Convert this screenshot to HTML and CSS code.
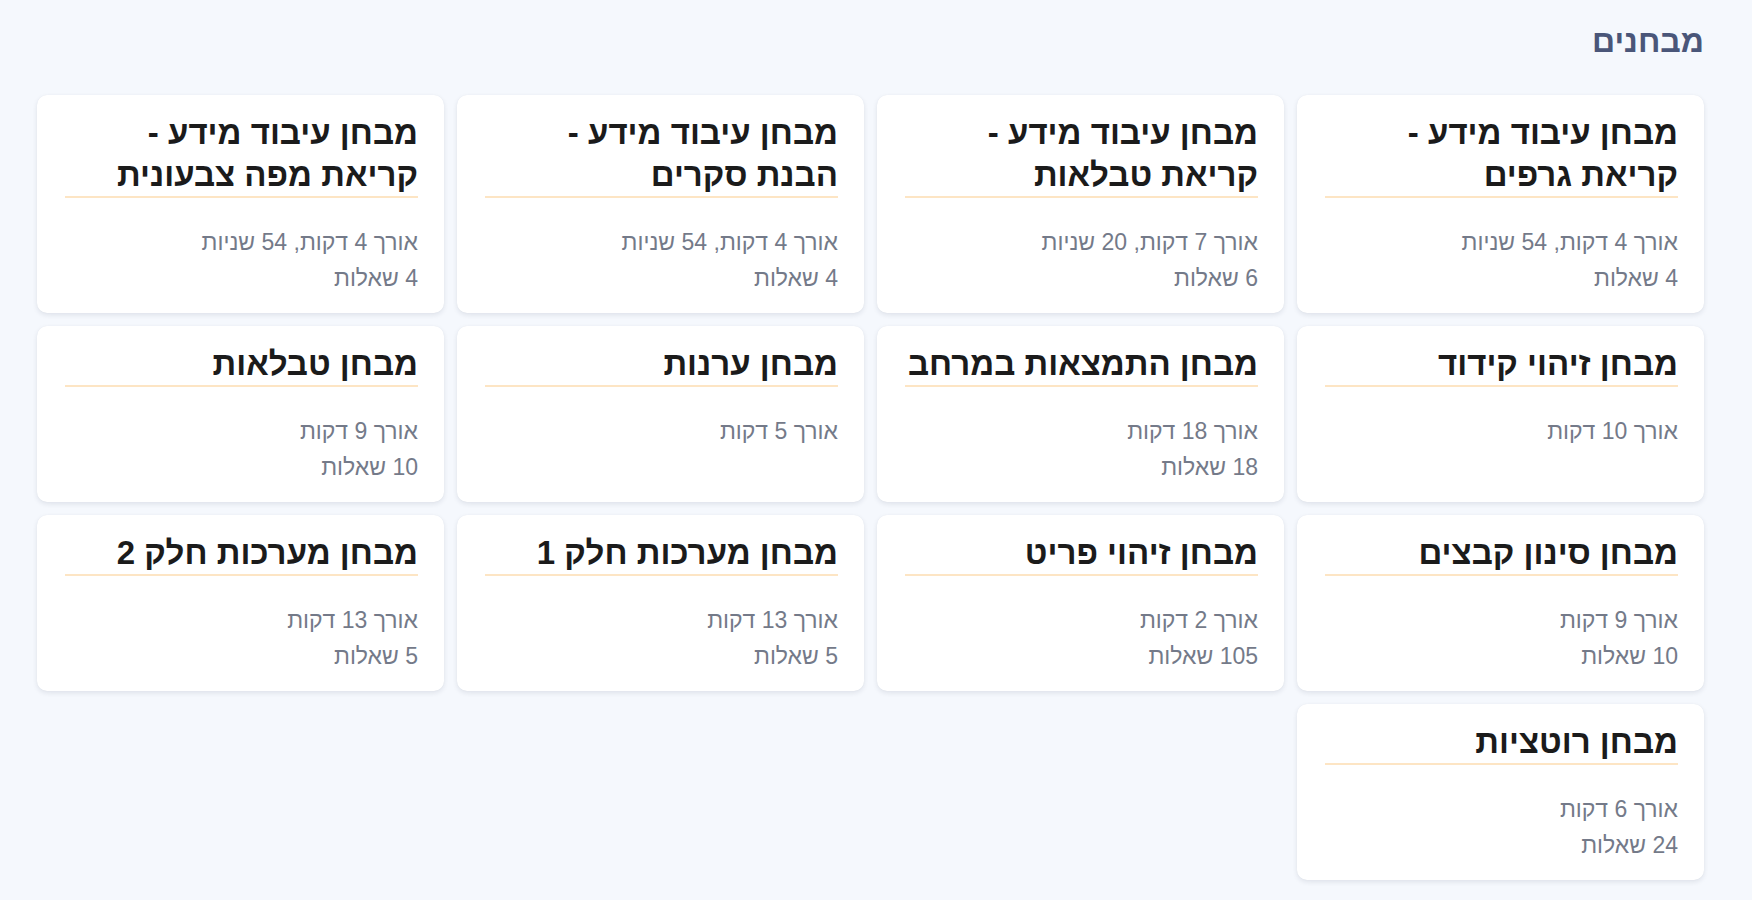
FILE: index.html
```html
<!DOCTYPE html>
<html lang="he" dir="rtl">
<head>
<meta charset="utf-8">
<title>מבחנים</title>
<link rel="stylesheet" href="styles.css">
</head>
<body>
<main class="page">
  <h1 class="page-title">מבחנים</h1>
  <section class="grid">
    <article class="card">
      <h2 class="card-title">מבחן עיבוד מידע -<br>קריאת גרפים</h2>
      <p class="meta">אורך 4 דקות, 54 שניות</p>
      <p class="meta">4 שאלות</p>
    </article>
    <article class="card">
      <h2 class="card-title">מבחן עיבוד מידע -<br>קריאת טבלאות</h2>
      <p class="meta">אורך 7 דקות, 20 שניות</p>
      <p class="meta">6 שאלות</p>
    </article>
    <article class="card">
      <h2 class="card-title">מבחן עיבוד מידע -<br>הבנת סקרים</h2>
      <p class="meta">אורך 4 דקות, 54 שניות</p>
      <p class="meta">4 שאלות</p>
    </article>
    <article class="card">
      <h2 class="card-title">מבחן עיבוד מידע -<br>קריאת מפה צבעונית</h2>
      <p class="meta">אורך 4 דקות, 54 שניות</p>
      <p class="meta">4 שאלות</p>
    </article>

    <article class="card">
      <h2 class="card-title">מבחן זיהוי קידוד</h2>
      <p class="meta">אורך 10 דקות</p>
    </article>
    <article class="card">
      <h2 class="card-title">מבחן התמצאות במרחב</h2>
      <p class="meta">אורך 18 דקות</p>
      <p class="meta">18 שאלות</p>
    </article>
    <article class="card">
      <h2 class="card-title">מבחן ערנות</h2>
      <p class="meta">אורך 5 דקות</p>
    </article>
    <article class="card">
      <h2 class="card-title">מבחן טבלאות</h2>
      <p class="meta">אורך 9 דקות</p>
      <p class="meta">10 שאלות</p>
    </article>

    <article class="card">
      <h2 class="card-title">מבחן סינון קבצים</h2>
      <p class="meta">אורך 9 דקות</p>
      <p class="meta">10 שאלות</p>
    </article>
    <article class="card">
      <h2 class="card-title">מבחן זיהוי פריט</h2>
      <p class="meta">אורך 2 דקות</p>
      <p class="meta">105 שאלות</p>
    </article>
    <article class="card">
      <h2 class="card-title">מבחן מערכות חלק 1</h2>
      <p class="meta">אורך 13 דקות</p>
      <p class="meta">5 שאלות</p>
    </article>
    <article class="card">
      <h2 class="card-title">מבחן מערכות חלק 2</h2>
      <p class="meta">אורך 13 דקות</p>
      <p class="meta">5 שאלות</p>
    </article>

    <article class="card">
      <h2 class="card-title">מבחן רוטציות</h2>
      <p class="meta">אורך 6 דקות</p>
      <p class="meta">24 שאלות</p>
    </article>
  </section>
</main>
</body>
</html>
```
FILE: styles.css
```css
html, body {
  margin: 0;
  padding: 0;
}

body {
  background: #f5f8fd;
  font-family: "Liberation Sans", Arial, sans-serif;
  color: #1b1b1b;
}

.page {
  padding: 19px 48px 20px 37px;
}

.page-title {
  margin: 0 0 32px 0;
  font-size: 32px;
  line-height: 44px;
  font-weight: 700;
  color: #4a5679;
}

.grid {
  display: grid;
  grid-template-columns: repeat(4, 1fr);
  gap: 13px;
}

.card {
  background: #ffffff;
  border-radius: 10px;
  box-shadow: 0 2px 5px rgba(30, 40, 70, 0.1), 0 0 1px rgba(30, 40, 70, 0.07);
  padding: 17px 26px 17px 28px;
}

.card-title {
  margin: 0 0 26px 0;
  font-size: 33px;
  line-height: 42px;
  font-weight: 700;
  color: #1b1b1b;
  border-bottom: 2px solid #fde5c4;
}

.meta {
  margin: 0;
  font-size: 23px;
  line-height: 36px;
  color: #747a89;
}
```
